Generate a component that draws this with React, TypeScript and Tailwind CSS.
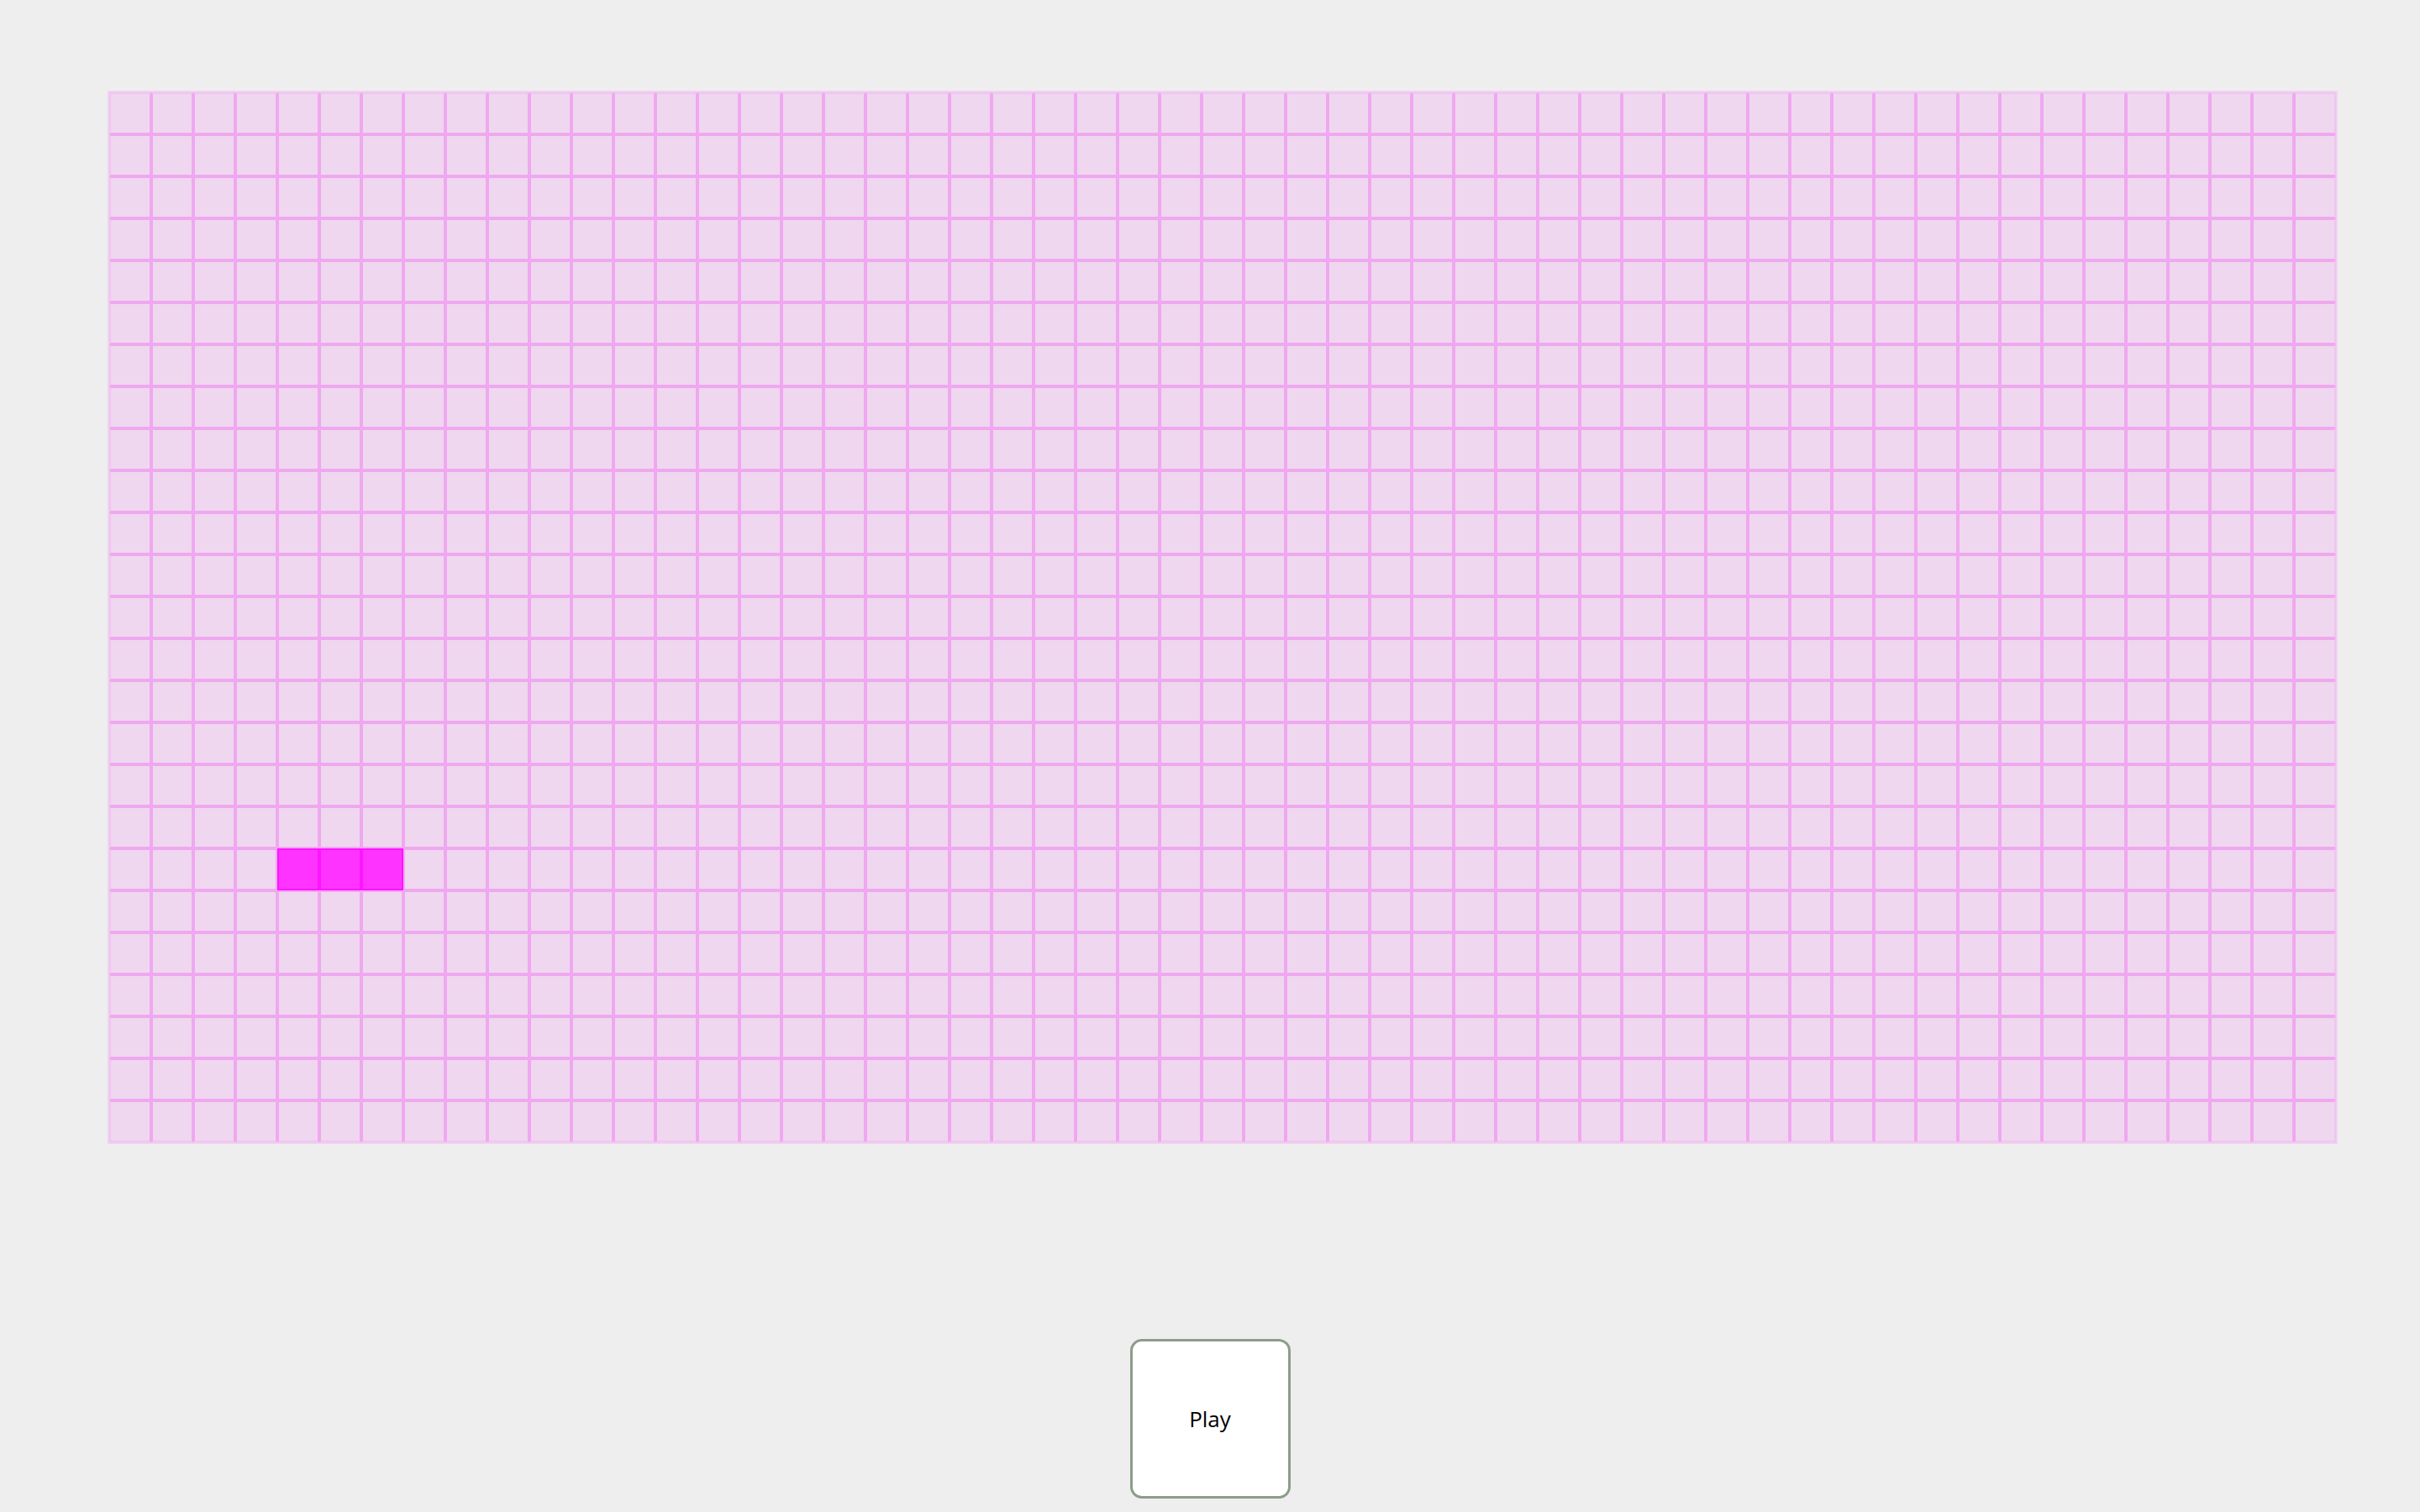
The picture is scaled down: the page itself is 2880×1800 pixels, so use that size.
import React from "react";

const COLS = 53;
const ROWS = 25;
const SNAKE = [
  [18, 4],
  [18, 5],
  [18, 6],
];

export default function App() {
  const isSnake = (r: number, c: number) => SNAKE.some(([sr, sc]) => sr === r && sc === c);

  return (
    <div className="min-h-[1800px] w-full bg-[#eeeeee] pt-[108px] font-['Open_Sans',sans-serif]">
      {/* Board */}
      <div className="ml-[128px] w-fit border-2 border-[#f1d2f1] bg-[#efd7ef]">
        {Array.from({ length: ROWS }).map((_, r) => (
          <div key={r} className="flex">
            {Array.from({ length: COLS }).map((_, c) =>
              isSnake(r, c) ? (
                <div key={c} className="h-[50px] w-[50px] border-2 border-[#ff14ff] bg-[#ff33ff]" />
              ) : (
                <div
                  key={c}
                  className={`h-[50px] w-[50px] border-2 border-[#efa8ef] ${
                    c === 0 ? "border-l-[#f0c4f0]" : ""
                  } ${c === COLS - 1 ? "border-r-[#f0c4f0]" : ""} ${
                    r === 0 ? "border-t-[#f0c4f0]" : ""
                  } ${r === ROWS - 1 ? "border-b-[#f0c4f0]" : ""}`}
                />
              )
            )}
          </div>
        ))}
      </div>

      {/* Controls */}
      <div className="mt-[232px] flex justify-center">
        <button className="flex h-[190px] w-[191px] items-center justify-center rounded-[14px] border-[3px] border-[#8b9e88] bg-white text-[26px] text-black">
          Play
        </button>
      </div>
    </div>
  );
}
